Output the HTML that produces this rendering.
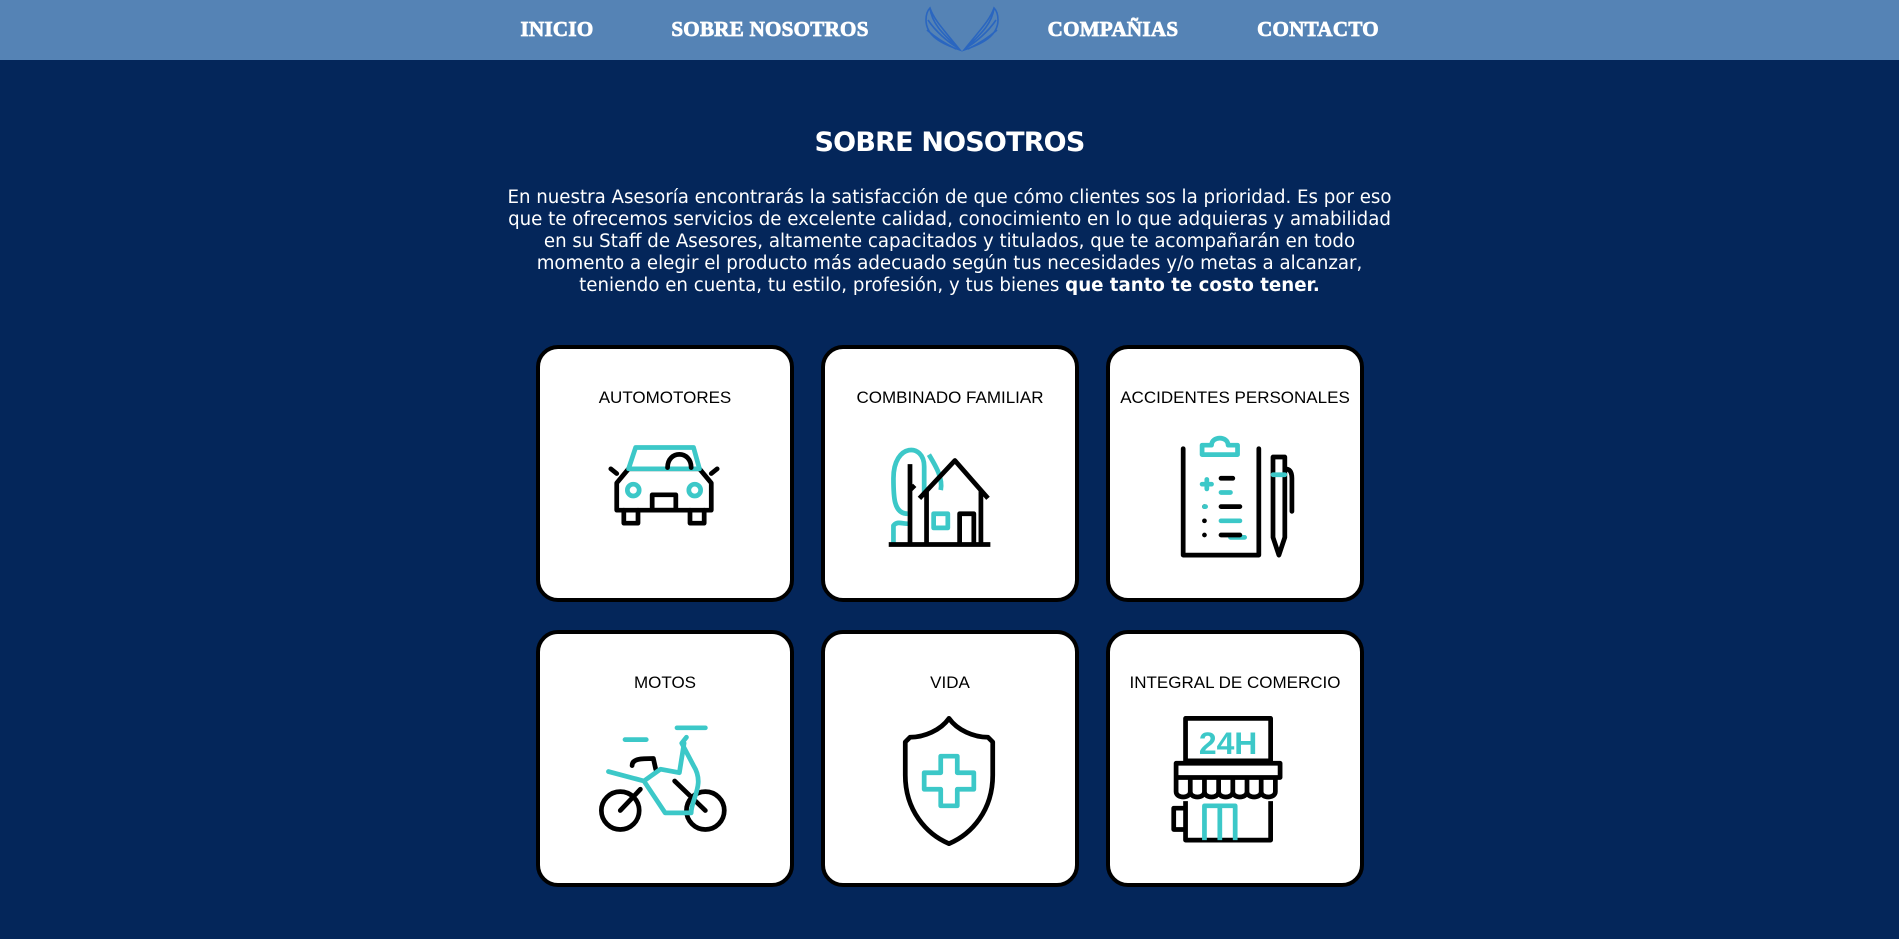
<!DOCTYPE html>
<html><head><meta charset="utf-8"><style>
*{margin:0;padding:0;box-sizing:border-box}
body{width:1899px;height:939px;background:#04265a;overflow:hidden;font-family:"Liberation Sans",sans-serif}
nav{height:60px;background:#5583b5;position:relative}
nav a{position:absolute;top:17px;color:#fff;font-family:"Liberation Serif",serif;font-weight:bold;font-size:21px;text-decoration:none;transform:translateX(-50%);letter-spacing:0.3px;-webkit-text-stroke:0.8px #fff}
h1{position:absolute;top:127px;width:100%;text-align:center;color:#fff;font-size:27px;font-weight:bold;font-family:"DejaVu Sans",sans-serif;letter-spacing:-0.8px}
p{position:absolute;top:187px;left:0;width:100%;text-align:center;color:#fff;font-family:"DejaVu Sans",sans-serif;font-size:18.2px;line-height:22px;white-space:nowrap}
.card{position:absolute;width:258px;height:257px;background:#fff;border:4px solid #000;border-radius:22px}
.card .t{position:absolute;top:39px;width:100%;text-align:center;font-size:17px;color:#000}
.card svg{position:absolute;left:59px;top:82px;width:130px;height:130px}
</style></head><body>
<nav>
<a style="left:557px">INICIO</a>
<a style="left:770px">SOBRE NOSOTROS</a>
<svg style="position:absolute;left:922px;top:6px" width="80" height="48" viewBox="0 0 80 48" fill="none" stroke="#2a66c0" stroke-width="1.6">
<path d="M38 44 C20 38 4 30 4 14 C4 8 6 4 8 2 C12 14 22 24 38 44 Z M8 2 C10 20 26 32 38 44 M6 14 C14 26 26 36 36 42 M5 24 C14 32 24 38 34 43"/>
<path d="M42 44 C60 38 76 30 76 14 C76 8 74 4 72 2 C68 14 58 24 42 44 Z M72 2 C70 20 54 32 42 44 M74 14 C66 26 54 36 44 42 M75 24 C66 32 56 38 46 43"/>
</svg>
<a style="left:1113px">COMPAÑIAS</a>
<a style="left:1318px">CONTACTO</a>
</nav>
<h1>SOBRE NOSOTROS</h1>
<p>En nuestra Asesoría encontrarás la satisfacción de que cómo clientes sos la prioridad. Es por eso<br>que te ofrecemos servicios de excelente calidad, conocimiento en lo que adquieras y amabilidad<br>en su Staff de Asesores, altamente capacitados y titulados, que te acompañarán en todo<br>momento a elegir el producto más adecuado según tus necesidades y/o metas a alcanzar,<br>teniendo en cuenta, tu estilo, profesión, y tus bienes <b>que tanto te costo tener.</b></p>

<div class="card" style="left:536px;top:345px"><div class="t">AUTOMOTORES</div>
<svg viewBox="0 0 110 110" fill="none" stroke-width="4" stroke-linejoin="round" stroke-linecap="round">
<path d="M15 44 L15 67 L95 67 L95 44 L85 32 L25 32 Z" stroke="#000"/>
<path d="M25 32 L31 14 L80 14 L85 32 Z" stroke="#3cc8c8"/>
<path d="M58 31 C58 16 78 16 78 31" stroke="#000"/>
<path d="M15 36 L10 32 M95 36 L100 32" stroke="#000"/>
<circle cx="29" cy="50" r="5" stroke="#3cc8c8"/><circle cx="81" cy="50" r="5" stroke="#3cc8c8"/>
<rect x="45" y="54" width="20" height="13" stroke="#000"/>
<path d="M21 67 L21 78 L33 78 L33 67 M77 67 L77 78 L89 78 L89 67" stroke="#000"/>
</svg></div>

<div class="card" style="left:821px;top:345px"><div class="t">COMBINADO FAMILIAR</div>
<svg viewBox="0 0 110 110" fill="none" stroke-width="4" stroke-linejoin="round">
<path d="M20 70 C8 70 8 55 8 40 C8 10 34 10 34 30 L34 55" stroke="#3cc8c8"/>
<path d="M38 20 C44 30 50 40 48 50" stroke="#3cc8c8"/>
<path d="M8 95 L8 80 C12 75 18 80 22 78" stroke="#3cc8c8"/>
<path d="M22 28 L22 95 M26 46 L22 50" stroke="#000"/>
<path d="M30 57 L60 25 L88 57 M36 50 L36 95 M82 50 L82 95 M4 96 L90 96 M64 95 L64 70 L76 70 L76 95" stroke="#000"/>
<rect x="42" y="70" width="12" height="12" stroke="#3cc8c8"/>
</svg></div>

<div class="card" style="left:1106px;top:345px"><div class="t">ACCIDENTES PERSONALES</div>
<svg viewBox="0 0 110 110" fill="none" stroke-width="4" stroke-linecap="round" stroke-linejoin="round">
<path d="M12 15 L12 105 L76 105 L76 15" stroke="#000"/>
<path d="M28 20 L28 12 L36 12 C36 4 50 4 50 12 L58 12 L58 20 Z" stroke="#3cc8c8"/>
<path d="M28 45 L36 45 M32 41 L32 49 M44 52 L52 52 M64 90 L52 90" stroke="#3cc8c8"/>
<path d="M44 40 L54 40 M30 64 L30 64 M44 64 L60 64 M30 76 L30 76 M30 88 L30 88 M44 88 L60 88" stroke="#000"/>
<path d="M44 76 L60 76 M30 64 L31 64" stroke="#3cc8c8"/>
<path d="M88 22 L88 90 L93 105 L98 90 L98 22 Z M98 32 C104 32 104 38 104 40 L104 68" stroke="#000"/>
<path d="M88 37 L98 37" stroke="#3cc8c8"/>
</svg></div>

<div class="card" style="left:536px;top:630px"><div class="t">MOTOS</div>
<svg viewBox="0 0 110 110" fill="none" stroke-width="4" stroke-linecap="round" stroke-linejoin="round">
<circle cx="18" cy="80" r="16" stroke="#000"/><circle cx="90" cy="80" r="16" stroke="#000"/>
<path d="M18 80 L35 62 M90 80 L64 55 M28 42 C28 36 36 36 46 36 L48 45" stroke="#000"/>
<path d="M22 20 L40 20 M66 10 L90 10" stroke="#3cc8c8"/>
<path d="M8 47 L38 55 L56 82 L78 82 C78 70 90 58 80 42 L70 23 L74 18 M38 55 L52 45 L68 48 L72 23" stroke="#3cc8c8"/>
</svg></div>

<div class="card" style="left:821px;top:630px"><div class="t">VIDA</div>
<svg viewBox="0 0 110 110" fill="none" stroke-width="4" stroke-linejoin="round">
<path d="M55 2 C48 12 34 18 22 18 L18 22 L18 50 C18 80 36 100 55 108 C74 100 92 80 92 50 L92 22 L88 18 C76 18 62 12 55 2 Z" stroke="#000"/>
<path d="M48 34 L62 34 L62 48 L76 48 L76 62 L62 62 L62 76 L48 76 L48 62 L34 62 L34 48 L48 48 Z" stroke="#3cc8c8"/>
</svg></div>

<div class="card" style="left:1106px;top:630px"><div class="t">INTEGRAL DE COMERCIO</div>
<svg viewBox="0 0 110 110" fill="none" stroke-width="4" stroke-linejoin="round">
<rect x="14" y="2" width="72" height="36" stroke="#000"/>
<text x="50" y="32" text-anchor="middle" font-family="Liberation Sans,sans-serif" font-weight="bold" font-size="27" fill="#3cc8c8" stroke="none">24H</text>
<path d="M6 40 L94 40 L94 52 L6 52 Z M6 52 L6 64 C6 70 18 70 18 64 C18 70 30 70 30 64 C30 70 42 70 42 64 C42 70 54 70 54 64 C54 70 66 70 66 64 C66 70 78 70 78 64 C78 70 90 70 90 64 L90 52 M18 52 L18 64 M30 52 L30 64 M42 52 L42 64 M54 52 L54 64 M66 52 L66 64 M78 52 L78 64 M14 72 L14 105 L86 105 L86 72 M4 78 L14 78 L14 96 L4 96 Z" stroke="#000"/>
<path d="M30 105 L30 76 L56 76 L56 105 M43 76 L43 105" stroke="#3cc8c8"/>
</svg></div>
</body></html>
